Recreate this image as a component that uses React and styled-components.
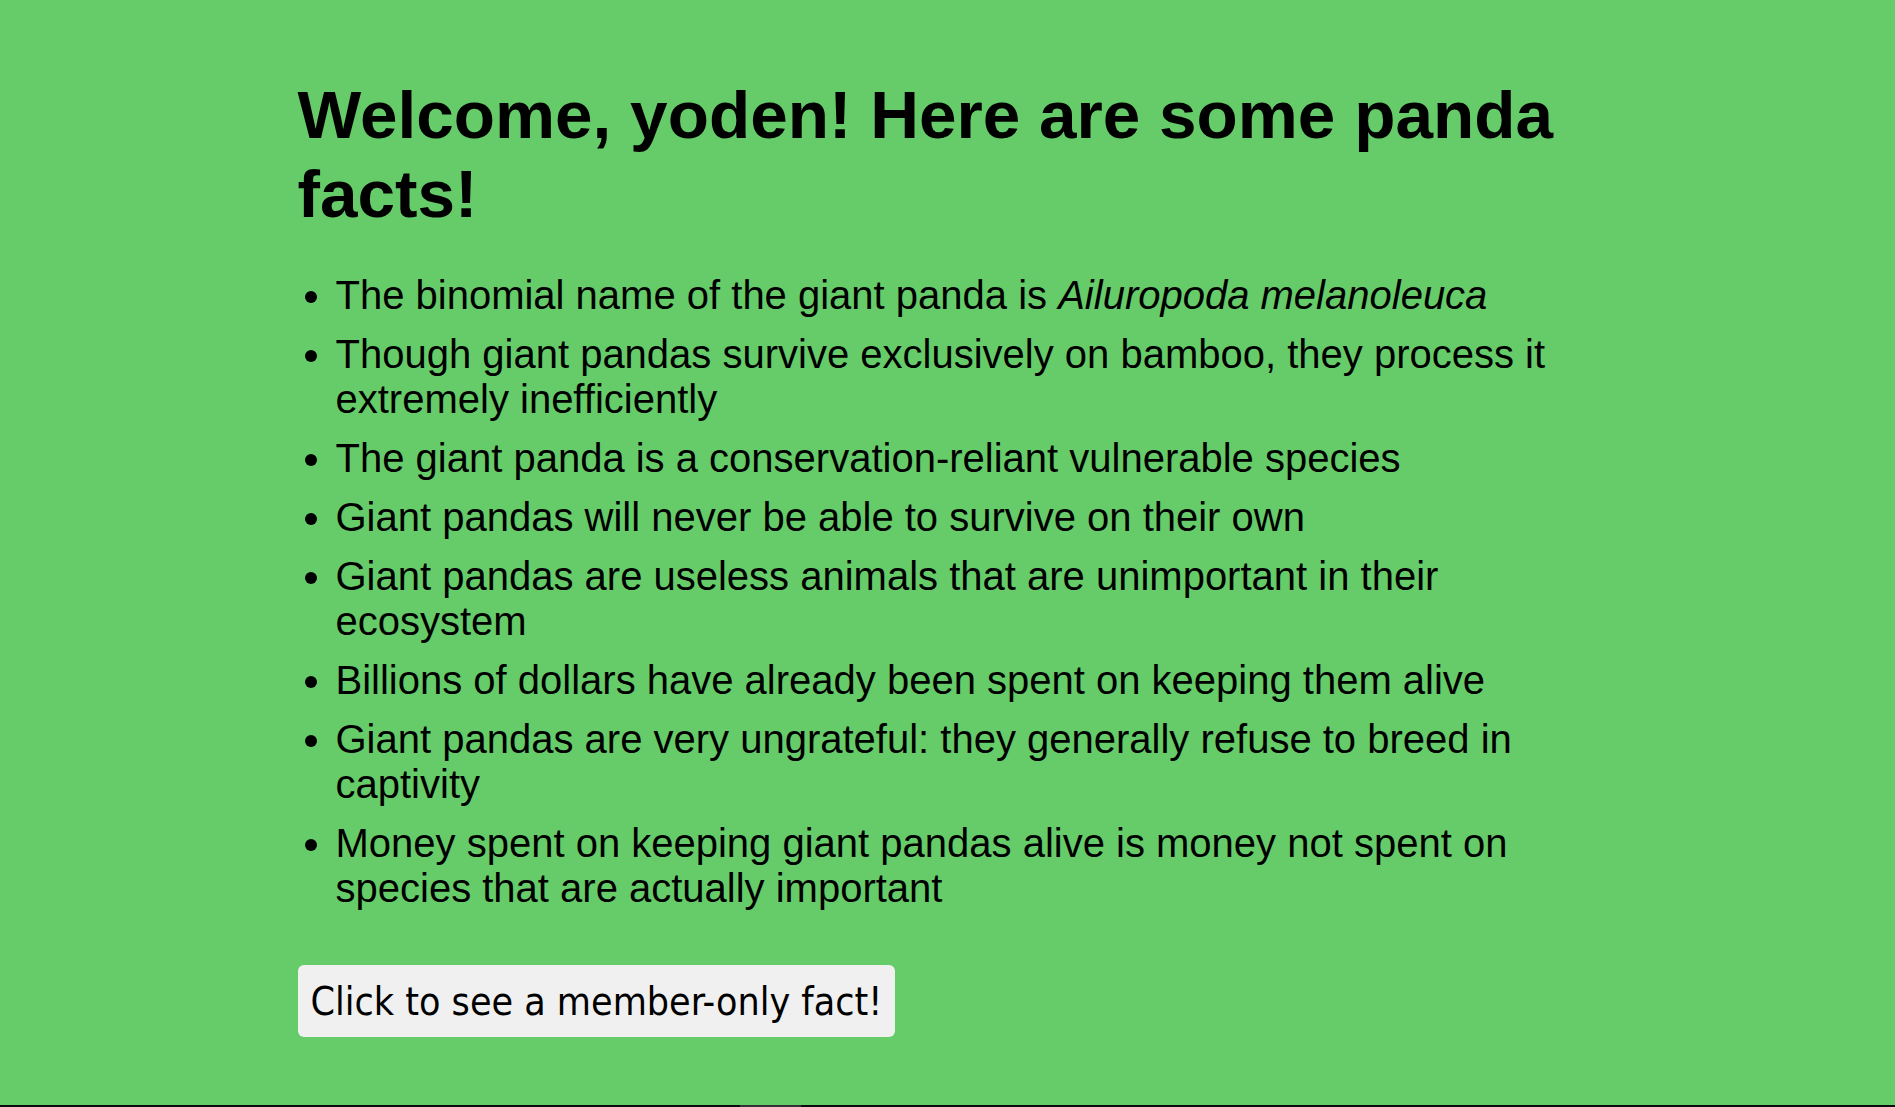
import React from "react";
import styled, { createGlobalStyle } from "styled-components";

const facts = [
  <>
    The binomial name of the giant panda is <em>Ailuropoda melanoleuca</em>
  </>,
  "Though giant pandas survive exclusively on bamboo, they process it extremely inefficiently",
  "The giant panda is a conservation-reliant vulnerable species",
  "Giant pandas will never be able to survive on their own",
  "Giant pandas are useless animals that are unimportant in their ecosystem",
  "Billions of dollars have already been spent on keeping them alive",
  "Giant pandas are very ungrateful: they generally refuse to breed in captivity",
  "Money spent on keeping giant pandas alive is money not spent on species that are actually important",
];

const GlobalStyle = createGlobalStyle`
  html, body {
    margin: 0;
    padding: 0;
    background: #66cc69;
  }
  body {
    font-family: "Liberation Sans", Arial, sans-serif;
    color: #000;
  }
`;

const Page = styled.div`
  min-height: 100vh;
  display: flex;
  flex-direction: column;
  box-sizing: border-box;
`;

const Main = styled.main`
  width: 1300px;
  margin: 0 auto;
  padding-top: 75px;
`;

const Title = styled.h1`
  margin: 0;
  font-size: 67.5px;
  font-weight: bold;
  line-height: 79px;
`;

const FactList = styled.ul`
  margin: 40px 0 0;
  padding: 0 0 0 38px;
  font-size: 40px;
  line-height: 45px;
`;

const Fact = styled.li`
  & + & {
    margin-top: 14px;
  }
  em {
    font-style: italic;
  }
`;

const MemberButton = styled.button`
  margin-top: 54px;
  height: 72px;
  padding: 0 13px;
  border: none;
  border-radius: 6px;
  background: #f0f0f0;
  color: #000;
  font-family: "DejaVu Sans Condensed", "DejaVu Sans", Tahoma, sans-serif;
  font-size: 39px;
  cursor: pointer;
`;

const BottomEdge = styled.div`
  margin-top: auto;
  height: 2px;
  background: #0b0b0b;
  display: flex;
  padding-left: 740px;
`;

const Thumb = styled.span`
  width: 61px;
  background: #333;
`;

export default function App() {
  return (
    <Page>
      <GlobalStyle />
      <Main>
        <Title>Welcome, yoden! Here are some panda facts!</Title>
        <FactList>
          {facts.map((f, i) => (
            <Fact key={i}>{f}</Fact>
          ))}
        </FactList>
        <MemberButton>Click to see a member-only fact!</MemberButton>
      </Main>
      <BottomEdge>
        <Thumb />
      </BottomEdge>
    </Page>
  );
}
